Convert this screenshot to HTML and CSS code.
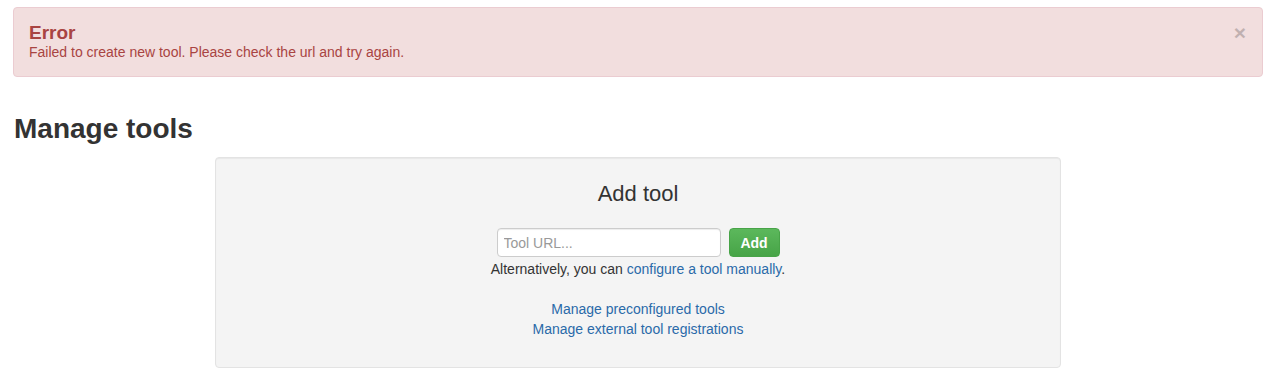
FILE: index.html
```html
<!DOCTYPE html>
<html lang="en">
<head>
    <meta charset="UTF-8">
    <meta name="viewport" content="width=device-width, initial-scale=1.0">
    <title>Manage tools</title>
    <link rel="stylesheet" href="styles.css">
</head>
<body>
    <div class="page">
        <div class="alert">
            <div class="alert-body">
                <h4>Error</h4>
                <div class="alert-msg">Failed to create new tool. Please check the url and try again.</div>
            </div>
            <button class="close" type="button">&times;</button>
        </div>

        <h2>Manage tools</h2>

        <div class="well">
            <h3>Add tool</h3>
            <form class="add-form">
                <input type="text" placeholder="Tool URL...">
                <button type="submit" class="btn-add">Add</button>
            </form>
            <p class="alt">Alternatively, you can <a href="#">configure a tool manually</a>.</p>
            <div class="links">
                <a href="#">Manage preconfigured tools</a>
                <a href="#">Manage external tool registrations</a>
            </div>
        </div>
    </div>
</body>
</html>
```

FILE: styles.css
```css
body {
    margin: 0;
    font-family: "Liberation Sans", Arial, sans-serif;
    font-size: 14px;
    line-height: 20px;
    color: #333;
    background: #fff;
}

.page {
    padding: 7px 12px 0 13px;
}

a {
    color: #2a6aa9;
    text-decoration: none;
}

/* error alert */
.alert {
    display: flex;
    justify-content: space-between;
    align-items: flex-start;
    background-color: #f2dede;
    border: 1px solid #ebccd1;
    border-radius: 4px;
    color: #a94442;
    padding: 15px;
}

.alert h4 {
    margin: 0;
    font-size: 19px;
    line-height: 20px;
    font-weight: bold;
}

.alert-msg {
    line-height: 18px;
}

.close {
    background: none;
    border: none;
    padding: 0;
    margin: 0 1px 0 0;
    font-family: "Liberation Sans", Arial, sans-serif;
    font-size: 21px;
    font-weight: bold;
    line-height: 20px;
    color: #000;
    opacity: 0.2;
    cursor: pointer;
}

h2 {
    margin: 36px 0 13px 1px;
    font-size: 28px;
    line-height: 31px;
    font-weight: bold;
}

/* add tool box */
.well {
    width: 846px;
    box-sizing: border-box;
    margin: 0 auto;
    background-color: #f4f4f4;
    border: 1px solid #e3e3e3;
    border-radius: 4px;
    box-shadow: inset 0 1px 1px rgba(0, 0, 0, 0.05);
    padding: 24px 19px 28px;
    text-align: center;
}

.well h3 {
    margin: 0;
    font-size: 22px;
    line-height: 24px;
    font-weight: normal;
}

.add-form {
    display: flex;
    justify-content: center;
    gap: 8px;
    margin-top: 22px;
}

.add-form input {
    width: 224px;
    height: 29px;
    box-sizing: border-box;
    border: 1px solid #ccc;
    border-radius: 4px;
    padding: 0 6px;
    font-family: "Liberation Sans", Arial, sans-serif;
    font-size: 14px;
    color: #555;
    background: #fff;
    box-shadow: inset 0 1px 1px rgba(0, 0, 0, 0.075);
}

.add-form input::placeholder {
    color: #999;
}

.btn-add {
    width: 51px;
    height: 29px;
    border: 1px solid #48a448;
    border-radius: 4px;
    background: linear-gradient(to bottom, #5cb85c 0, #47a447 100%);
    color: #fff;
    font-family: "Liberation Sans", Arial, sans-serif;
    font-size: 14px;
    font-weight: bold;
    padding: 0;
    cursor: pointer;
}

.alt {
    margin: 2px 0 0;
}

.links {
    display: flex;
    flex-direction: column;
    align-items: center;
    margin-top: 20px;
}
```
